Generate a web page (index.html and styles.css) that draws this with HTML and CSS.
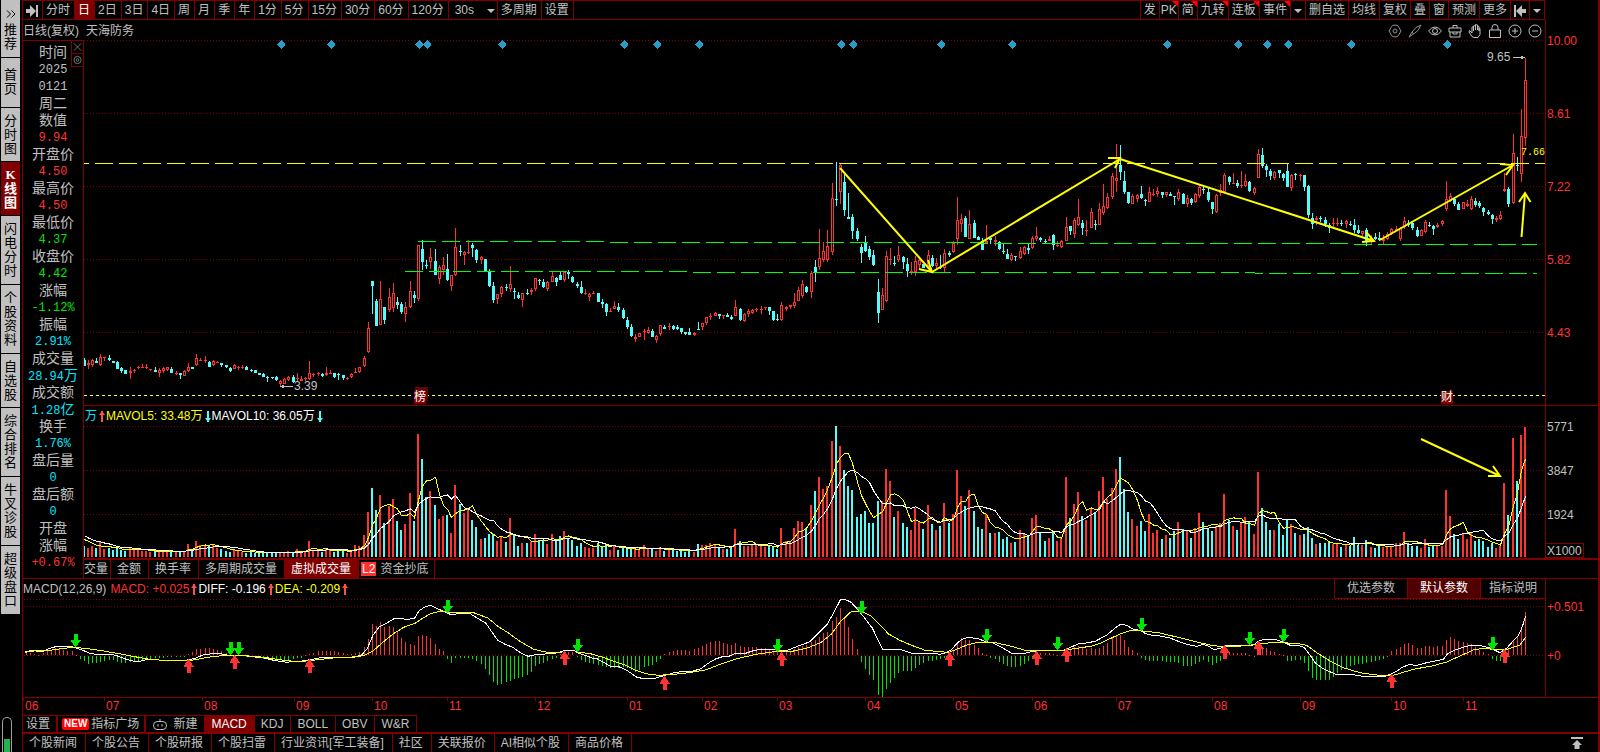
FILE: index.html
```html
<!DOCTYPE html>
<html lang="zh-CN">
<head>
<meta charset="utf-8">
<title>天海防务 日线</title>
<link rel="stylesheet" href="styles.css">
</head>
<body>
<div class="app">
  <aside class="rail">
    <nav class="rail-nav">
      <button class="rail-tab"><svg class="chev" viewBox="0 0 10 8"><path d="M1 0.5L4.500 4L1 7.500M5.500 0.500L9 4L5.500 7.500"/></svg>推荐</button>
      <button class="rail-tab pad">首页</button>
      <button class="rail-tab three">分时图</button>
      <button class="rail-tab three on">K线图</button>
      <button class="rail-tab">闪电分时</button>
      <button class="rail-tab">个股资料</button>
      <button class="rail-tab three">自选股</button>
      <button class="rail-tab">综合排名</button>
      <button class="rail-tab">牛叉诊股</button>
      <button class="rail-tab">超级盘口</button>
    </nav>
    <div class="gauge"><span class="gauge-fill"></span></div>
  </aside>

  <main class="main">
    <header class="toolbar">
      <div class="tools">
        <button class="tool" aria-label="收起"><svg class="ic12" viewBox="0 0 12 12"><path d="M0 4h4V0l6 6-6 6V8H0zM10 0h2v12h-2z"/></svg></button>
        <button class="tool">分时</button><button class="tool on">日</button><button class="tool">2日</button><button class="tool">3日</button><button class="tool">4日</button><button class="tool">周</button><button class="tool">月</button><button class="tool">季</button><button class="tool">年</button><button class="tool">1分</button><button class="tool">5分</button><button class="tool">15分</button><button class="tool">30分</button><button class="tool">60分</button><button class="tool">120分</button>
        <button class="tool wide">30s<i class="caret"></i></button><button class="tool">多周期</button><button class="tool">设置</button>
      </div>
      <div class="tools right">
        <button class="tool">发</button><button class="tool new slim">PK</button><button class="tool new">简</button><button class="tool new">九转</button><button class="tool new">连板</button><button class="tool new">事件</button><button class="tool" aria-label="更多事件"><i class="caret"></i></button><button class="tool">删自选</button><button class="tool">均线</button><button class="tool">复权</button><button class="tool">叠</button><button class="tool">窗</button><button class="tool">预测</button><button class="tool">更多</button><button class="tool" aria-label="收起右栏"><svg class="ic12" viewBox="0 0 12 12"><path d="M12 4H8V0L2 6l6 6V8h4zM0 0h2v12H0z"/></svg></button><button class="tool" aria-label="菜单"><i class="caret"></i></button>
      </div>
    </header>

    <div class="titlebar">
      <h1 class="title"><span>日线(复权)</span><span>天海防务</span></h1>
      <div class="icons">
        <svg class="dim" viewBox="0 0 14 14"><path d="M4.500 1.500L7 1l2.500.500 1.500 2L13 7l-2 3.500-1.500 2L7 13l-2.500-.500-1.500-2L1 7l2-3.500z"/><circle cx="7" cy="7" r="2"/></svg>
        <svg class="dim" viewBox="0 0 14 14"><path d="M13 1L8 3.500 4 8l1.500 2L10 6.500zM4 8L1 13l4.500-3"/></svg>
        <svg viewBox="0 0 14 14"><path d="M.500 7Q7-1 13.500 7Q7 15 .500 7z"/><circle cx="7" cy="7" r="2.500"/></svg>
        <svg viewBox="0 0 14 14"><path d="M1 4h12v4H1zM2 8v5h10V8M5 4V1.500h4V4M5 8v2h4V8"/></svg>
        <svg viewBox="0 0 14 14"><path d="M4 9L1.500 6.500 1 8l3 4.500 2 1h4l2-3V4.500L11 4v3M11 7V2.500L9.500 2v4M9.500 6V1L7.500.500V6M7.500 6V1.500L5.500 2v5M5.500 6V3L4 3v6"/></svg>
        <svg viewBox="0 0 14 14"><path d="M1.500 6h11v7.500h-11zM4 6V3.500Q4 .500 7 .500T10 3.500V6"/></svg>
        <svg viewBox="0 0 14 14"><circle cx="7" cy="7" r="6"/><path d="M4 7h6M7 4v6"/></svg>
        <svg viewBox="0 0 14 14"><circle cx="7" cy="7" r="6"/><path d="M4 7h6"/></svg>
      </div>
    </div>

    <section class="panel price">
      <div class="plot" id="price-plot"><svg id="price" viewBox="23 40 1522 365" preserveAspectRatio="none"></svg></div>
      <ul class="axis"><li>10.00</li><li>8.61</li><li>7.22</li><li>5.82</li><li>4.43</li></ul>
    </section>

    <section class="panel volume">
      <div class="plot">
        <svg id="volume" viewBox="23 406 1522 152" preserveAspectRatio="none"></svg>
        <p class="legend vol-legend"><span class="cyan">万</span><i class="tick up"></i><span class="yellow">MAVOL5: 33.48万</span><i class="tick down"></i><span class="white">MAVOL10: 36.05万</span><i class="tick down"></i></p>
      </div>
      <div class="axis"><ul><li>5771</li><li>3847</li><li>1924</li></ul><span class="unit">X1000</span></div>
    </section>

    <nav class="tabs vol-tabs">
      <button class="tab first">交量</button><button class="tab">金额</button><button class="tab">换手率</button><button class="tab">多周期成交量</button><button class="tab on">虚拟成交量</button><button class="tab flag"><span class="l2">L2</span>资金抄底</button>
    </nav>

    <section class="panel macd">
      <div class="plot">
        <svg id="macd" viewBox="23 579 1522 118" preserveAspectRatio="none"></svg>
        <p class="legend"><span>MACD(12,26,9)</span><span class="red gap">MACD: +0.025</span><i class="tick up"></i><span class="white">DIFF: -0.196</span><i class="tick up"></i><span class="yellow">DEA: -0.209</span><i class="tick up"></i></p>
        <div class="params"><button>优选参数</button><button class="on">默认参数</button><button class="last">指标说明</button></div>
      </div>
      <ul class="axis"><li>+0.501</li><li>+0</li></ul>
    </section>
    <div class="months"><div class="months-track" id="months"></div></div>

    <nav class="tabs ind-tabs">
      <button class="tab set">设置</button>
      <button class="tab flag"><span class="badge">NEW</span>指标广场</button>
      <button class="tab build"><svg class="bot" viewBox="0 0 14 12"><path d="M4 3.500h6Q13.500 3.500 13.500 7.500T10 11.500H4Q.500 11.500.500 7.500T4 3.500zM7 3.500V1M5 6v2.500M9 6v2.500"/></svg>新建</button>
      <button class="tab on">MACD</button><button class="tab">KDJ</button><button class="tab">BOLL</button><button class="tab">OBV</button><button class="tab">W&amp;R</button>
    </nav>

    <footer class="tabs foot">
      <button class="tab">个股新闻</button><button class="tab">个股公告</button><button class="tab">个股研报</button><button class="tab">个股扫雷</button><button class="tab">行业资讯[军工装备]</button><button class="tab">社区</button><button class="tab">关联报价</button><button class="tab">AI相似个股</button><button class="tab">商品价格</button>
      <button class="totop" aria-label="展开"><svg class="ic12" viewBox="0 0 12 12"><path d="M0 0h12v2H0zM6 3l5 5H8.500v4h-5V8H1z"/></svg></button>
    </footer>

    <aside class="info">
      <div class="info-btns">
        <button aria-label="关闭"><svg viewBox="0 0 10 10"><path d="M1 1l8 8M9 1L1 9"/></svg></button>
        <button aria-label="设置"><svg viewBox="0 0 10 10"><circle cx="5" cy="5" r="4"/><circle cx="5" cy="5" r="1.500"/></svg></button>
      </div>
      <dl>
        <dt>时间</dt><dd>2025</dd><dd>0121</dd><dt>周二</dt>
        <dt>数值</dt><dd class="red">9.94</dd>
        <dt>开盘价</dt><dd class="red">4.50</dd>
        <dt>最高价</dt><dd class="red">4.50</dd>
        <dt>最低价</dt><dd class="green">4.37</dd>
        <dt>收盘价</dt><dd class="green">4.42</dd>
        <dt>涨幅</dt><dd class="green">-1.12%</dd>
        <dt>振幅</dt><dd class="cyan">2.91%</dd>
        <dt>成交量</dt><dd class="cyan">28.94<b>万</b></dd>
        <dt>成交额</dt><dd class="cyan">1.28<b>亿</b></dd>
        <dt>换手</dt><dd class="cyan">1.76%</dd>
        <dt>盘后量</dt><dd class="cyan">0</dd>
        <dt>盘后额</dt><dd class="cyan">0</dd>
        <dt>开盘</dt><dt>涨幅</dt><dd class="red">+0.67%</dd>
      </dl>
    </aside>
  </main>
</div>
<script src="chart.js"></script>
</body>
</html>
```
FILE: styles.css
```css
* { box-sizing: border-box; }
body, h1, p, ul, dl, dd { margin: 0; padding: 0; }
ul { list-style: none; }
body {
  background: #000;
  color: #c0c0c0;
  font: 12px/16px "Liberation Sans", "Noto Sans CJK SC", sans-serif;
  overflow: hidden;
}
button {
  background: none;
  border: 0;
  margin: 0;
  padding: 0;
  color: inherit;
  font: inherit;
  white-space: nowrap;
}
svg { display: block; fill: none; stroke: currentColor; }
.red { color: #ff3232; }
.green { color: #00e600; }
.cyan { color: #00e5ff; }
.yellow { color: #ffff00; }
.white { color: #fff; }

.app { display: flex; min-height: 100vh; }

/* left rail */
.rail {
  width: 22px;
  flex: none;
  padding-left: 1px;
  display: flex;
  flex-direction: column;
  justify-content: space-between;
}
.rail-nav { width: 19px; display: flex; flex-direction: column; gap: 1px; }
.rail-tab {
  background: #c0c0c0;
  color: #000;
  padding: 6px 3px;
  line-height: 14px;
  white-space: normal;
  word-break: break-all;
  font-size: 13px;
}
.rail-tab.pad { padding: 10px 3px 11px; }
.rail-tab.three { padding: 6px 3px 5px; }
.rail-tab.on { background: #800000; color: #fff; font-family: "Liberation Serif", "Noto Sans CJK SC", serif; font-weight: bold; }
.chev { width: 10px; height: 8px; margin: 4px auto 5px; }
.gauge {
  width: 10px;
  height: 35px;
  margin-left: 1px;
  border: 1px solid #a0a0a0;
  border-bottom: 0;
  border-radius: 5px 5px 0 0;
  display: flex;
  align-items: flex-end;
  padding: 0 1px;
}
.gauge-fill { flex: 1; height: 13px; background: #22b14c; }

.main {
  position: relative;
  flex: 1;
  min-width: 0;
  display: flex;
  flex-direction: column;
  border-left: 1px solid #800000;
  border-right: 2px solid #800000;
}

/* top bar */
.toolbar {
  display: flex;
  justify-content: space-between;
  height: 20px;
  margin-right: 53px;
  border-bottom: 1px solid #800000;
  border-top: 1px solid #800000;
}
.tools { display: flex; }
.tool {
  position: relative;
  display: flex;
  align-items: center;
  padding: 1px 4px 0 3px;
  border-right: 1px solid #800000;
  line-height: 17px;
}
.right { border-left: 1px solid #800000; }
.right .tool { padding: 1px 3px 0; }
.right .slim { padding: 1px 1px 0; }
.tool.on { background: #800000; color: #fff; }
.tool.wide { width: 49px; justify-content: space-between; padding: 1px 2px 0 6px; }
.tool.new::after {
  content: "";
  position: absolute;
  top: 0;
  right: 0;
  border: 3px solid transparent;
  border-top-color: #f00;
  border-right-color: #f00;
}
.caret { border: 4px solid transparent; border-top-color: #c0c0c0; border-bottom: 0; }
.ic12 { width: 12px; height: 12px; fill: #c0c0c0; stroke: none; }

.titlebar {
  display: flex;
  justify-content: space-between;
  align-items: center;
  height: 20px;
  padding: 1px 56px 0 0;
}
.title { display: flex; gap: 7px; font-size: 12px; line-height: 18px; font-weight: normal; }
.icons { display: flex; gap: 6px; }
.icons svg { width: 14px; height: 14px; }
.icons .dim { color: #909090; }

/* chart panels */
.panel { display: flex; border-bottom: 1px solid #800000; }
.plot { position: relative; flex: 1; min-width: 0; }
.plot > svg { width: 100%; shape-rendering: crispEdges; }
.axis { width: 53px; flex: none; border-left: 1px solid #800000; padding-left: 1px; display: flex; flex-direction: column; }
.axis li { height: 14px; line-height: 14px; }
.price .plot > svg { height: 365px; }
.price .axis { color: #ff3232; gap: 59px; margin-top: -20px; padding-top: 14px; }
.volume .plot > svg { height: 152px; }
.volume .axis { padding: 14px 0 0; justify-content: space-between; }
.volume .axis ul { display: flex; flex-direction: column; gap: 30px; padding-left: 1px; }
.unit { align-self: flex-start; height: 15px; line-height: 14px; padding: 0 1px; border: 1px solid #800000; border-left: 0; }
.macd .plot > svg { height: 118px; }
.macd .axis { color: #ff3232; padding-top: 21px; gap: 35px; }

.legend { position: absolute; left: 0; top: 2px; display: flex; line-height: 16px; white-space: nowrap; }
.vol-legend { left: 62px; }
.legend .gap { margin-left: 4px; }
.tick { width: 9px; position: relative; }
.tick::before, .tick::after { content: ""; position: absolute; left: 4px; top: 3px; width: 2px; height: 11px; background: #ff5050; }
.tick::after { left: 2px; width: 0; height: 0; background: none; border: 3px solid transparent; border-top: 0; border-bottom: 4px solid #ff5050; }
.tick.down::before { background: #54fcfc; }
.tick.down::after { top: 10px; border-top: 4px solid #54fcfc; border-bottom: 0; }

.note { position: absolute; line-height: 14px; white-space: nowrap; }
.note.level { color: #ffff00; font-family: "Liberation Mono", monospace; font-size: 10px; }
.note.tag { background: #800000; color: #fff; line-height: 13px; }

.months { height: 17px; padding-right: 53px; color: #ff3232; }
.months-track { position: relative; }
.month { position: absolute; padding-left: 1px; line-height: 16px; height: 3px; border-left: 1px solid #800000; }

.params { position: absolute; right: 0; top: 0; display: flex; border: 1px solid #800000; border-width: 0 0 1px 1px; line-height: 19px; }
.params button { padding: 0 12px; }
.params .on { background: #500000; color: #fff; border: 1px solid #800000; border-width: 0 1px; }
.params .last { padding: 0 8px; }

/* tab strips */
.tabs { display: flex; }
.tab { display: flex; align-items: center; padding: 0 7px 0 6px; border-right: 1px solid #800000; line-height: 17px; }
.tab.on { background: #800000; color: #fff; }
.vol-tabs { height: 20px; padding-left: 61px; border-bottom: 1px solid #800000; border-top: 1px solid #800000; }
.vol-tabs .tab { line-height: 19px; }
.vol-tabs .first { padding: 0 2px 0 0; }
.vol-tabs .flag { padding: 0 6px 0 2px; gap: 4px; }
.vol-tabs .l2 { background: #ff3232; color: #fff; padding: 0 1px; line-height: 14px; }
.ind-tabs { height: 17px; align-self: flex-start; border-top: 1px solid #800000; }
.ind-tabs .set { padding: 0 6px 0 3px; border-right-width: 2px; }
.ind-tabs .flag { padding: 0 5px 0 4px; gap: 2px; border-right-width: 2px; }
.ind-tabs .build { padding: 0 7px; gap: 6px; }
.badge { background: #f00; color: #fff; font-size: 10px; font-weight: bold; line-height: 12px; padding: 0 2px; border-radius: 2px; }
.bot { width: 14px; height: 12px; }
.foot { border-top: 2px solid #800000; flex: 1; min-height: 19px; }
.foot .tab { line-height: 18px; padding: 0 8px 0 6px; }
.totop { margin-left: auto; padding-right: 15px; display: flex; align-items: center; }

/* floating quote panel */
.info {
  position: absolute;
  left: -1px;
  top: 40px;
  width: 62px;
  height: 539px;
  background: #000;
  border: 1px solid #800000;
  padding-top: 3px;
  text-align: center;
}
.info dt, .info dd { line-height: 17px; height: 17px; font-size: 14px; white-space: nowrap; }
.info dd { font-family: "Liberation Mono", "Noto Sans CJK SC", monospace; font-size: 12px; line-height: 19px; }
.info b { font-size: 14px; font-weight: normal; }
.info-btns { position: absolute; right: -1px; top: -1px; }
.info-btns button { display: block; width: 13px; height: 14px; padding: 1px; border: 1px solid #800000; margin-bottom: -1px; color: #808080; }
.info-btns svg { width: 9px; height: 10px; }
```
FILE: chart.js
```js
// Daily bars, one per row: x, r(ise)/c(ool = fall), high, body top, body bottom, low, volume.
// Values are in thirds of a unit relative to each block's origin.
const blocks = [
{ x: 0, y: 180, rows: `254c 534 540 558 558 33|265r 540 548 554 566 27|277r 536 540 554 560 33|289c 534 542 548 550 27|301r 522 532 554 558 45|313r 530 532 534 544 24|328c 526 534 540 544 27|340c 542 544 550 550 21|352c 544 546 566 566 27|364c 560 564 574 578 21|376c 570 570 582 582 18|391r 562 572 580 596 29|403r 568 570 574 580 24|415r 558 560 562 566 21|427r 552 560 562 564 18|439r 552 562 564 566 18|451r 566 568 570 572 15|466c 562 570 576 576 18|478r 564 570 580 592 21|490r 562 564 572 580 17|502r 560 562 570 572 15|514c 562 568 580 580 17|529r 574 578 580 586 15|541c 578 580 586 596 17|553r 570 574 588 588 17|565r 548 560 574 576 39|577c 560 562 566 568 24|589r 522 534 554 558 48|601r 534 540 542 544 36|616r 528 540 542 548 33|628c 544 546 560 562 36|640r 540 544 554 558 36|652r 542 546 548 550 27|664c 548 550 556 562 24|679c 554 556 562 564 17|691c 562 564 572 576 15|703r 552 556 566 568 24|715r 558 560 562 570 17|727r 556 560 562 566 15|739c 558 560 570 570 13|754c 568 570 574 576 15|766c 570 570 580 580 13|778c 578 580 584 586 11|790c 580 582 590 592 11|802c 588 590 592 606 14|817c 590 591 594 598 12|829c 588 592 600 602 14|841r 600 602 612 620 15|853r 594 598 612 612 11|865r 588 590 600 604 18|880c 586 592 606 608 12|892r 580 594 596 604 24` },
{ x: 300, y: 220, rows: `4r 468 476 482 484 16|16r 472 474 478 482 16|28r 423 458 476 480 48|40r 458 462 466 472 21|55r 456 460 462 468 18|67c 460 463 467 470 15|79r 441 460 464 468 24|91r 450 458 460 462 21|103c 458 460 472 474 15|115c 458 462 464 480 24|130c 464 466 474 480 18|142r 470 474 476 480 12|154r 458 462 472 474 21|166r 444 456 458 460 36|178r 440 442 456 460 33|193r 408 414 438 440 66|205r 306 324 396 400 135|217c 183 183 198 282 207|229c 237 243 318 318 141|241r 183 237 315 315 186|253c 261 261 300 312 102|268r 204 231 270 276 153|280r 189 219 264 276 174|292c 231 246 255 267 108|304c 246 252 276 282 81|316r 246 261 282 306 99|331r 183 213 261 264 192|343c 213 225 234 249 108|355r 75 75 237 243 369|367c 60 87 126 150 294|379c 120 135 138 147 180|391r 84 111 126 147 198|406c 87 123 165 165 156|418r 135 141 177 192 114|430r 111 135 150 165 123|442c 102 147 180 183 126|454r 165 165 198 213 72|466r 24 81 165 168 216|481c 75 93 96 108 159|493r 93 96 105 135 132|505r 60 96 99 102 147|517c 69 75 84 111 111|529c 87 90 120 129 90|544r 108 111 120 132 54|556c 117 117 153 153 57|568c 147 153 198 201 69|580c 186 198 240 249 69|592r 222 222 237 252 48|604r 198 201 222 231 60|619c 192 200 203 213 45|631r 138 192 207 216 117|643c 204 213 216 237 66|655c 216 225 234 237 33|667r 219 219 240 261 42|682c 207 219 222 225 42|694r 204 210 216 225 45|706r 174 174 207 213 69|718c 177 180 183 195 48|730c 177 186 201 204 51|742r 183 186 207 213 39|757r 156 168 186 186 69|769c 171 174 186 198 48|781c 156 165 180 180 63|793r 153 156 180 186 78|805c 150 157 163 177 57|817c 168 171 186 189 51|832c 186 192 198 204 33|844c 183 201 219 222 42|856r 207 219 222 225 30|868r 219 222 231 243 27|880r 213 219 222 222 27|895c 219 219 246 246 42|907c 237 246 252 264 33|919c 249 252 276 288 39|931r 264 273 276 276 21|943r 243 258 267 267 36|955c 249 261 270 276 21|970c 264 270 294 297 27|982c 291 300 321 327 24|994c 312 321 348 351 24|1006r 342 351 357 366 24|1018r 339 339 351 351 21|1033r 327 333 336 360 36|1045r 321 330 339 342 27|1057c 327 333 351 351 24|1069r 345 348 360 369 18|1081r 315 315 342 348 30|1093c 315 322 326 327 18|1108r 309 318 321 330 21|1120c 315 318 327 330 21|1132c 315 321 327 330 18|1144c 324 324 336 342 21|1156c 336 336 342 345 15|1168c 324 336 345 345 24|1183r 336 339 345 348 15|1195c 306 326 329 330 39|1207r 309 309 321 330 36|1219r 291 291 309 315 36|1231r 279 288 291 300 42|1246r 276 279 288 288 36|1258c 282 282 288 297 30|1270r 285 285 288 297 24|1282c 279 285 291 291 24|1294c 285 291 297 300 27|1306r 240 261 288 288 84|1321c 264 267 300 303 48|1333r 279 282 303 306 33|1345r 267 273 282 291 33|1357r 267 270 279 282 36|1369r 264 267 270 276 36|1384r 258 267 270 282 33|1396r 261 261 264 270 30|1408c 261 261 273 285 33|1420c 273 273 300 303 30|1432c 282 297 300 303 24|1444r 246 255 300 303 87|1459r 258 261 267 273 48|1471r 255 255 261 267 45|1483r 219 246 258 264 87|1495r 201 210 243 243 108` },
{ x: 780, y: 130, rows: `67r 450 462 498 504 105|79c 468 471 486 489 87|94r 423 429 486 504 156|106c 390 411 426 456 198|118r 297 384 411 420 240|130r 336 363 390 396 204|142r 300 348 390 396 213|157r 159 204 366 375 348|169c 96 207 210 228 393|181r 99 105 186 222 333|193c 129 156 240 258 261|205c 189 261 267 267 213|217c 252 261 303 327 201|232c 294 303 327 333 120|244c 342 351 369 399 129|256c 318 336 363 366 138|268c 348 357 381 390 102|280c 360 375 405 408 102|295c 447 486 549 579 168|307r 474 495 540 540 168|319r 363 378 513 516 264|331r 354 387 390 405 228|343c 378 399 402 408 120|355r 348 375 390 396 138|370c 378 381 396 417 102|382c 384 402 423 441 90|394r 396 423 426 435 81|406r 378 393 426 438 147|418r 384 390 405 420 108|430c 402 402 414 414 84|445r 360 375 408 414 156|457c 375 384 408 411 99|469r 384 399 408 417 81|481c 375 411 414 417 93|493r 357 369 414 426 162|508c 363 369 375 381 102|520r 333 339 366 369 129|532r 201 270 327 345 261|544r 252 267 282 306 183|556c 258 264 321 321 153|568r 240 282 327 327 201|583c 270 279 324 324 138|595c 318 321 330 330 90|607c 324 333 360 360 84|619r 285 333 339 342 129|631c 318 324 330 342 72|646r 318 330 336 348 72|658c 333 336 357 360 75|670c 342 363 366 372 54|682c 357 372 387 387 60|694r 369 375 390 393 42|706c 378 378 381 393 45|721r 351 363 384 387 81|733r 348 351 372 375 72|745c 342 354 360 372 66|757r 318 324 354 357 117|769r 291 318 327 333 126|781c 321 324 330 336 72|796c 327 333 336 339 48|808r 318 327 333 333 57|820c 312 315 345 360 75|832r 333 345 348 351 48|844r 330 333 351 354 57|859r 261 291 333 333 240|871c 288 288 303 315 117|883r 264 270 312 324 159|895r 207 261 285 288 195|907c 270 279 294 315 123|919r 270 300 303 318 111|934r 234 246 294 294 147|946c 270 282 285 300 135|958r 219 237 285 285 198|970r 162 228 249 255 240|982r 189 201 234 237 174|997r 129 138 201 207 207|1009r 42 144 153 186 264|1021c 45 105 126 150 300|1033c 123 153 186 192 204|1045c 186 186 219 222 135|1057r 192 198 222 222 114|1072r 192 195 207 216 93|1084c 168 192 204 207 108|1096c 207 210 213 228 78|1108r 171 186 216 216 129|1120r 177 192 195 198 72|1132r 171 183 192 201 81|1147c 186 186 195 204 54|1159r 186 186 195 201 66|1171c 186 192 198 198 57|1183c 198 198 201 225 78|1195r 177 186 207 213 105|1210c 189 192 222 222 84|1222r 195 204 222 231 78|1234c 204 207 219 225 57|1246r 189 192 216 219 87|1258r 165 171 198 204 132|1270c 168 177 180 192 105|1285c 174 186 210 216 84|1297c 216 216 237 252 78|1309r 192 195 246 249 93|1321r 162 180 190 198 102|1333r 129 135 186 186 189|1348c 138 141 156 165 111|1360r 129 159 162 162 93|1372c 150 159 168 174 81|1384r 123 165 168 174 102|1396r 132 153 168 171 120|1408c 153 156 183 186 105|1423r 171 174 189 195 69|1435r 57 72 144 144 255|1447c 54 75 108 114 147|1459c 102 108 120 141 105|1471c 117 123 138 150 81|1483r 123 126 144 150 81` },
{ x: 1200, y: 130, rows: `238c 120 120 129 144 99|250c 129 132 144 153 66|262c 99 123 171 171 111|274r 132 135 174 183 99|286c 129 132 135 150 72|301r 132 135 138 153 66|313c 135 135 171 183 69|325c 165 168 255 264 90|337c 249 264 282 297 57|349r 258 264 270 285 39|361c 258 264 267 276 42|376c 261 270 282 291 42|388c 279 285 294 309 45|400r 264 279 282 297 39|412r 264 279 282 288 39|424c 270 279 282 288 30|439r 270 273 282 294 36|451c 273 282 285 288 33|463c 267 285 300 309 60|475c 285 300 309 312 36|487r 303 303 312 318 36|499c 294 300 336 348 51|514r 315 327 336 342 30|526c 309 321 327 330 27|538c 306 325 330 333 33|550r 315 328 332 342 30|562r 306 312 327 330 33|574r 294 297 309 315 33|589r 288 297 303 303 42|601r 291 294 327 333 42|613r 261 273 291 297 75|625c 270 279 285 291 42|637c 276 279 294 300 33|652c 291 300 318 321 33|664r 297 300 318 318 27|676r 270 276 306 309 54|688c 276 285 288 291 30|700c 285 288 297 315 33|712r 279 285 291 294 33|727r 270 273 282 288 33|739r 153 207 237 243 201|751r 189 198 213 216 123|763c 204 207 222 228 69|775c 216 222 240 240 54|790r 216 216 237 237 72|802r 210 222 228 231 54|814r 198 207 237 240 72|826c 204 213 225 231 48|838c 213 219 228 234 54|850c 231 234 246 258 48|865c 240 246 252 255 30|877c 252 255 267 282 42|889r 258 264 270 276 27|901r 243 255 267 270 33|913r 129 177 183 186 222|925c 171 177 222 231 126|940r 12 69 219 222 357|952c 81 105 108 123 228|964r -63 18 132 156 366|976r -216 -150 24 48 390` }
];
const RED = '#ff3232', CYAN = '#54fcfc', DARK = '#800000', YELLOW = '#ffff00', GREEN = '#00ff00';
const bars = blocks.flatMap(b => b.rows.split('|').map(s => {
  const m = s.match(/^(\d+)([rc]) (.*)$/), v = m[3].split(' ').map(Number);
  const y = n => b.y + Math.round(n / 3);
  return { x: b.x + Math.floor(m[1] / 3), up: m[2] === 'r', hi: y(v[0]), top: y(v[1]), bot: y(v[2]), lo: y(v[3]), vol: v[4] / 3 };
}));

const rect = (x, y, w, h, c) => `<rect x="${x}" y="${y}" width="${w}" height="${h}" fill="${c}" stroke="none"/>`;
const dotted = y => `<path d="M24 ${y + .5}H1545" stroke="${DARK}" stroke-dasharray="1 2"/>`;
const dashed = (x1, x2, y, c, d, o) => `<path d="M${x1} ${y + .5}H${x2}" stroke="${c}" stroke-dasharray="${d}" stroke-dashoffset="${o || 0}"/>`;
const poly = (pts, c) => `<polyline points="${pts.map(p => p.map(n => Math.round(n * 10) / 10).join()).join(' ')}" stroke="${c}"/>`;
const pen = d => `<path d="${d}" stroke="${YELLOW}" stroke-width="2" shape-rendering="auto"/>`;
const el = id => document.getElementById(id);

// Price
let s = [40, 113, 186, 259, 332].map(dotted).join('');
for (const b of bars) {
  const c = b.up ? RED : CYAN, h = Math.max(1, b.bot - b.top);
  s += rect(b.x, b.hi, 1, Math.max(0, b.top - b.hi), c) + rect(b.x, b.bot, 1, Math.max(0, b.lo - b.bot), c) + rect(b.x - 1, b.top, 3, h, c);
  if (b.up && h > 2) s += rect(b.x, b.top + 1, 1, h - 2, '#000');
}
s += dashed(84, 1545, 163, YELLOW, '18 6', 13);
s += dashed(418, 604, 241, GREEN, '18 6') + dashed(610, 979, 242, GREEN, '18 6') + dashed(979, 1348, 243, GREEN, '18 6', 9) + dashed(1354, 1537, 244, GREEN, '18 6');
s += dashed(405, 687, 271, GREEN, '18 6') + dashed(693, 1255, 272, GREEN, '18 6') + dashed(1255, 1537, 273, GREEN, '18 6', 10);
s += dashed(84, 1545, 395, '#ffff40', '3 3');
for (const x of [281, 331, 419, 427, 502, 624, 657, 699, 841, 853, 941, 1012, 1167, 1238, 1267, 1288, 1351, 1447])
  s += `<path d="M${x + .5} 40l4 4.500-4 4.500-4-4.500z" fill="#2a9cc8" stroke="none"/>`;
s += pen('M840 168L932 272M928 260L932 272L919 269') + pen('M932 272L1120 159M1108 158H1120L1115 168')
  + pen('M1120 159L1374 241M1366 232L1374 241L1362 242') + pen('M1380 240L1513 165M1500 164L1513 165L1506 175')
  + pen('M1521.500 237L1525 193M1519 202L1525 193L1530.500 202');
s += '<path d="M283 386.500H293M1513 57.500H1523" stroke="#c0c0c0"/><path d="M280 386.500l4-2v4zM1525 57.500l-4-2v4z" fill="#c0c0c0" stroke="none"/>';
s += rect(415, 387, 13, 14, '#600808');
el('price').innerHTML = s;

const note = (x, y, text, cls) => {
  const n = document.createElement('span');
  n.className = 'note ' + (cls || '');
  n.textContent = text;
  n.style.left = (x - 23) / 15.22 + '%';
  n.style.top = y - 40 + 'px';
  el('price-plot').append(n);
};
note(294, 379, '3.39'); note(1487, 50, '9.65'); note(1521, 146, '7.66', 'level');
note(414, 391, '榜', 'tag'); note(1441, 391, '财', 'tag');

// Volume with 5- and 10-day averages
const past = [95, 85, 75, 60, 60, 55, 60, 60, 55];
const vols = past.map(v => v / 3).concat(bars.map(b => b.vol));
const average = n => bars.map((b, i) => {
  const end = i + past.length + 1;
  return [b.x + .5, 557 - vols.slice(end - n, end).reduce((a, v) => a + v, 0) / n];
});
s = [426, 470, 514].map(dotted).join('');
for (const b of bars) { const h = Math.round(b.vol); s += rect(b.x - 1, 557 - h, 2, h, b.up ? RED : CYAN); }
s += poly(average(5), YELLOW) + poly(average(10), '#fff') + pen('M1421 439L1500 476M1493 466L1500 476H1488');
el('volume').innerHTML = s;

// MACD: each curve is a list of sections [origin x, origin y, x scale, points]
const curve = parts => parts.flatMap(([ox, oy, sx, p]) => p.split(' ').map(q => { const [x, y] = q.split(','); return [ox + x / sx, oy + y / 3]; }));
const A = [0, 540, 2.6133], B = [560, 560, 2.8], C = [1100, 400, 3];
const diff = curve([
  [...A, '65,335 85,331 95,333 115,333 125,327 145,320 180,318 197,323 215,330 235,340 260,345 290,343 305,347 330,358 350,364 365,364 380,360 400,359 430,361 470,361 490,360 510,355 530,345 555,341 580,342 600,347 640,347 660,350 690,354 720,362 750,367 770,364 790,363 810,359 835,354 860,352 890,352 925,352 945,345 960,325 975,285 990,262 1010,250 1030,236 1045,235 1060,238 1083,236 1095,212 1110,201 1125,196 1140,204 1155,212 1168,218 1180,225 1200,220 1230,222 1250,236 1270,250 1285,275 1300,300 1320,313 1340,322 1360,338 1380,349 1400,344 1435,341 1460,338 1475,331 1500,331'],
  [...B, '50,279 60,283 75,288 90,294 105,297 120,306 140,318 165,320 190,333 215,352 230,355 265,355 290,347 320,338 340,335 370,334 395,326 415,310 435,297 455,290 470,290 490,281 520,280 545,271 570,268 600,268 612,272 640,270 665,259 700,245 730,212 748,193 768,155 785,119 800,119 815,127 835,150 850,170 875,205 890,240 903,268 930,270 950,267 985,280 1010,280 1050,281 1065,283 1080,278 1095,270 1110,252 1125,238 1145,232 1170,236 1190,244 1215,250 1240,264 1265,280 1300,280 1325,274 1350,271 1410,270 1430,262 1450,252 1480,248 1500,243'],
  [...C, '0,716 20,706 45,684 62,673 80,676 100,688 120,691 135,700 155,706 180,708 210,714 240,726 265,734 290,739 310,733 325,738 340,748 360,746 380,735 440,735 460,735 478,722 495,718 530,720 555,728 570,736 600,738 612,742 630,765 645,788 670,806 705,822 760,824 800,831 815,828 850,831 870,823 890,814 905,803 925,794 950,796 980,788 1010,782 1030,778 1042,762 1065,750 1090,742 1110,736 1145,738 1170,744 1200,758 1220,745 1240,722 1255,708 1267,680 1277,648']]);
const dea = curve([
  [...A, '65,337 90,333 130,331 160,326 190,322 220,325 260,331 290,337 330,345 370,354 400,359 430,361 500,361 530,355 560,349 600,346 650,348 690,352 730,359 760,363 800,363 840,358 870,354 920,351 950,347 975,333 1000,307 1030,280 1055,262 1085,250 1100,238 1125,221 1150,214 1180,217 1240,219 1275,234 1300,258 1330,280 1360,305 1395,328 1430,337 1470,336'],
  [...B, '50,276 85,281 120,292 150,304 180,314 210,330 240,341 275,346 320,343 360,338 410,329 450,312 500,295 550,283 600,275 650,274 690,265 730,248 760,222 785,185 815,155 845,154 870,168 890,188 920,222 950,240 980,254 1020,270 1060,275 1090,277 1110,268 1140,255 1165,248 1220,248 1260,258 1300,270 1330,273 1410,271 1440,266 1490,258'],
  [...C, '0,730 30,716 60,702 90,692 130,693 180,699 230,711 290,726 330,735 370,741 440,737 490,730 540,727 600,732 620,736 650,758 690,783 730,803 780,818 830,825 880,826 940,808 1000,797 1040,786 1080,768 1120,750 1150,745 1190,749 1225,747 1260,735 1277,712']]);
const hist = curve([
  [...A, '65,335 75,337 85,341 100,344 120,335 145,325 165,330 190,334 193,340 208,352 230,368 255,366 272,360 290,355 320,368 350,362 400,352 450,348 480,349 495,340 515,327 540,324 575,330 600,342 612,345 640,346 660,350 700,354 740,358 790,350 800,345 830,334 870,333 900,341 925,341 945,335 953,320 964,295 973,252 985,258 994,246 1005,262 1020,258 1030,262 1040,280 1050,295 1062,308 1083,315 1094,285 1104,285 1125,293 1138,312 1150,328 1160,335 1168,352 1180,365 1190,350 1215,350 1240,355 1260,372 1270,385 1280,405 1290,425 1300,432 1330,420 1350,413 1370,408 1390,392 1400,375 1430,360 1460,348 1470,335 1500,336'],
  [...B, '35,278 50,290 70,302 100,310 130,318 150,322 180,318 210,333 235,320 260,310 280,295 292,282 320,271 345,270 362,273 390,264 410,252 430,242 445,243 480,256 491,249 505,259 550,261 580,265 600,278 625,272 650,272 668,262 690,254 714,241 740,218 750,214 763,183 774,170 785,144 796,172 807,200 819,237 833,267 844,302 855,324 866,342 878,358 891,402 903,411 914,384 925,366 936,352 947,335 960,330 985,330 1000,315 1030,300 1060,297 1080,288 1090,275 1101,270 1113,250 1125,234 1136,242 1148,240 1160,254 1172,265 1184,280 1200,288 1220,294 1240,310 1265,318 1290,315 1310,302 1325,288 1345,279 1370,279 1390,284 1400,290 1420,270 1450,256 1475,268 1490,262 1505,268'],
  [...C, '9,740 36,715 50,708 62,704 74,722 86,742 98,750 112,760 124,770 136,778 180,780 235,785 250,795 275,795 300,782 312,776 338,792 362,780 375,755 420,760 437,760 450,765 462,770 474,762 490,738 510,752 535,760 550,766 562,780 600,776 612,785 625,810 637,830 650,837 690,837 702,825 715,812 740,800 765,792 800,785 850,775 862,768 875,752 900,742 915,730 930,730 950,742 962,745 975,738 1000,740 1027,738 1039,720 1051,711 1075,722 1100,730 1115,732 1130,745 1150,755 1165,762 1178,775 1190,780 1205,780 1215,760 1228,745 1240,720 1253,710 1265,680 1277,632']]);
const at = (pts, x) => {
  const i = pts.findIndex(p => p[0] >= x);
  if (i <= 0) return i ? pts[pts.length - 1][1] : pts[0][1];
  const [a, b] = [pts[i - 1], pts[i]];
  return a[1] + (b[1] - a[1]) * (x - a[0]) / (b[0] - a[0]);
};
const ZERO = 655;
s = [599, 606, ZERO].map(dotted).join('');
const xs = Array.from({ length: 14 }, (_, i) => Math.round(84 - 4.147 * (14 - i))).concat(bars.map(b => b.x));
for (const x of xs) {
  const y = Math.round(at(hist, x + .4)), up = y <= ZERO;
  s += up ? rect(x, y, 1, Math.max(1, ZERO - y), RED) : rect(x, ZERO + 1, 1, Math.max(1, y - ZERO), '#00e600');
}
s += poly(diff, '#fff') + poly(dea, YELLOW);
const down = [[75, 647], [230, 655], [238, 655], [447, 613], [577, 652], [777, 652], [861, 614], [986, 642], [1057, 650], [1141, 631], [1249, 645], [1283, 642], [1492, 650]];
const rise = [[188, 659], [234, 655], [309, 659], [564, 651], [664, 676], [781, 652], [949, 652], [1036, 651], [1066, 648], [1224, 645], [1258, 641], [1391, 674], [1504, 649]];
for (const [x, y] of down) s += `<path d="M${x + .5} ${y}l-5-6v-1h3v-6h4v6h3v1z" fill="#00e600" stroke="none"/>`;
for (const [x, y] of rise) s += `<path d="M${x + .5} ${y}l-5 7v1h3v6h4v-6h3v-1z" fill="${RED}" stroke="none"/>`;
el('macd').innerHTML = s;

// Month scale
[[23, '06'], [104, '07'], [202, '08'], [294, '09'], [372, '10'], [447, '11'], [535, '12'], [627, '01'], [702, '02'], [777, '03'], [865, '04'], [953, '05'], [1032, '06'], [1116, '07'], [1212, '08'], [1300, '09'], [1391, '10'], [1463, '11']].forEach(([x, t]) => {
  const m = document.createElement('span');
  m.className = 'month';
  m.textContent = t;
  m.style.left = (x - 23) / 15.22 + '%';
  el('months').append(m);
});
```
